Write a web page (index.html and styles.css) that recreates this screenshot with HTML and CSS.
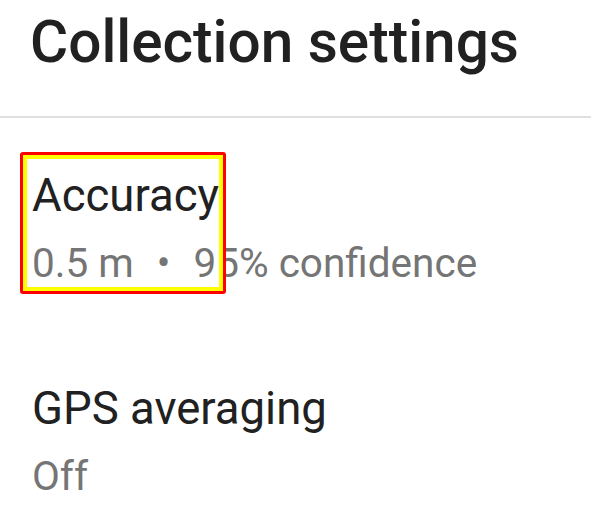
FILE: index.html
```html
<!DOCTYPE html>
<html lang="en">
<head>
  <meta charset="UTF-8" />
  <meta name="viewport" content="width=device-width, initial-scale=1.0"/>
  <title>Collection settings</title>
  <link rel="stylesheet" href="styles.css">
</head>
<body>

  <div class="header">
    <h1>Collection settings</h1>
  </div>
  <div class="divider"></div>

  <ul class="settings">
    <li class="setting">
      <div class="setting-title">Accuracy</div>
      <div class="setting-summary">0.5 m<span class="dot">•</span>95% confidence</div>
      <div class="highlight"></div>
    </li>
    <li class="setting">
      <div class="setting-title">GPS averaging</div>
      <div class="setting-summary">Off</div>
    </li>
  </ul>

</body>
</html>
```

FILE: styles.css
```css
body {
  margin: 0;
  background: #ffffff;
  font-family: Roboto, "Noto Sans", Arial, sans-serif;
  color: #212121;
}
.header {
  padding: 6px 30px 38px;
}
h1 {
  margin: 0;
  font-size: 58.5px;
  line-height: 72px;
  font-weight: 500;
  white-space: nowrap;
}
.divider {
  height: 2px;
  background: #e0e0e0;
}
.settings {
  list-style: none;
  margin: 0;
  padding: 6px 0 0;
}
.setting {
  position: relative;
  padding: 40px 32px 42px;
}
.setting-title {
  font-size: 45.5px;
  line-height: 64px;
  color: #212121;
  white-space: nowrap;
}
.setting-summary {
  margin-top: 3px;
  font-size: 40.5px;
  line-height: 64px;
  color: #757575;
  white-space: nowrap;
}
.dot {
  margin: 0 23px;
}
.highlight {
  position: absolute;
  left: 20px;
  top: 28px;
  width: 206px;
  height: 142px;
  box-sizing: border-box;
  border: 3px solid #ff0000;
  border-radius: 3px;
  box-shadow: inset 0 0 0 4px #ffff00;
}
```
